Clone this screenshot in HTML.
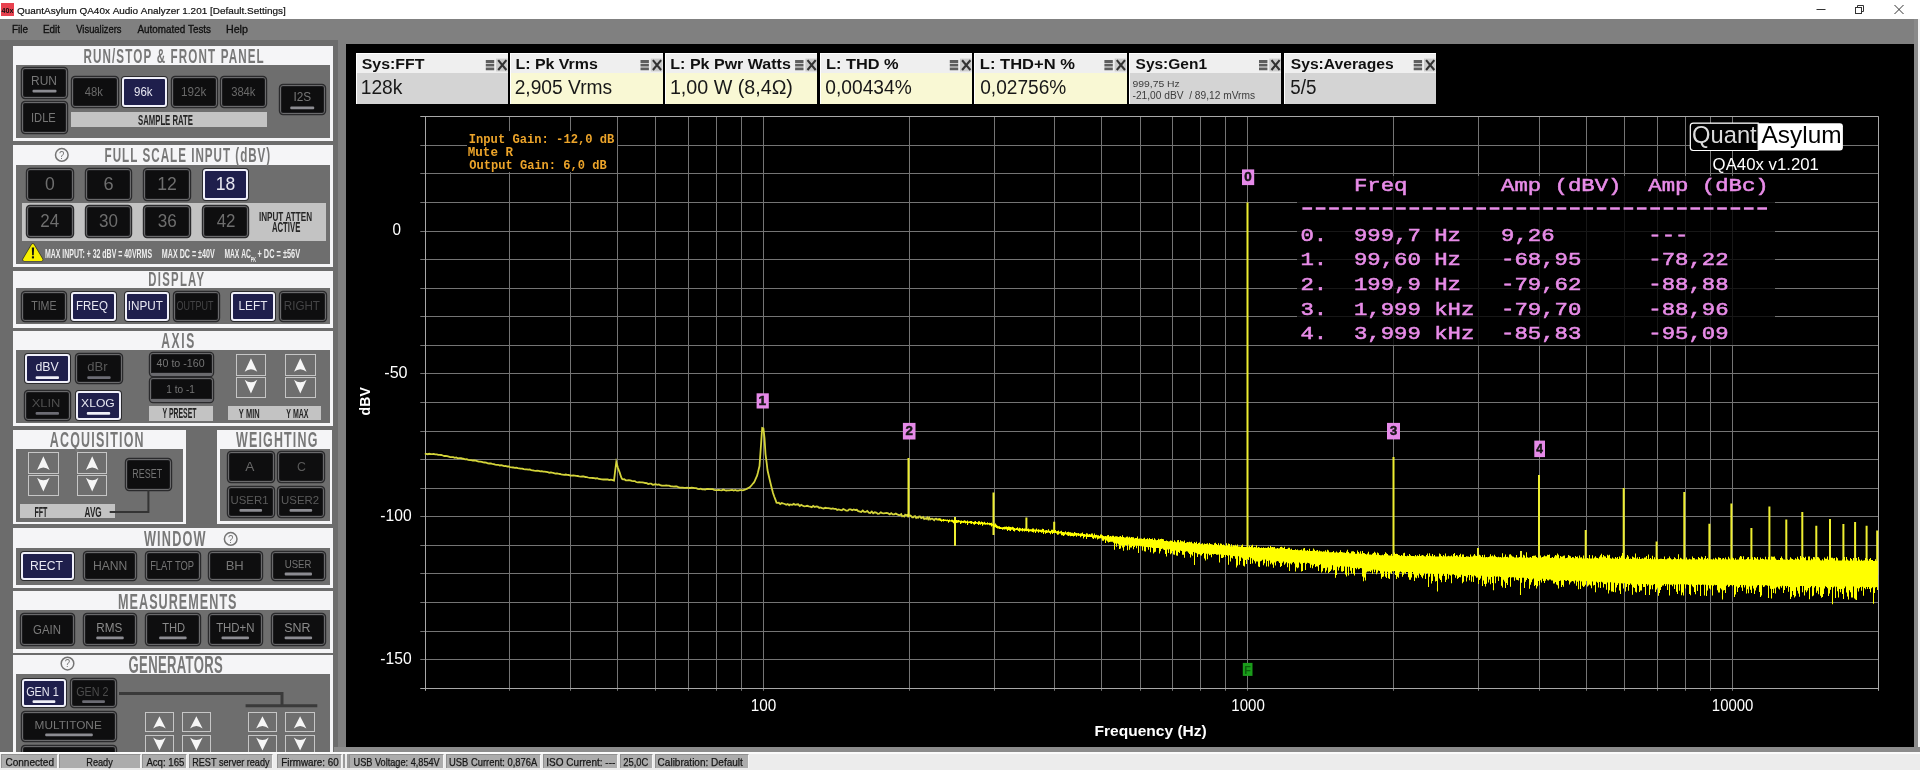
<!DOCTYPE html><html><head><meta charset="utf-8"><title>QuantAsylum QA40x Audio Analyzer</title><style>
html,body{margin:0;padding:0}
body{width:1920px;height:770px;overflow:hidden;position:relative;background:#808080;font-family:"Liberation Sans",sans-serif}
.btn{position:absolute;box-sizing:border-box;background:#0e0e0f;border:1.6px solid #6a6a6c;border-radius:3px;box-shadow:0 0 0 1.2px #2a2a2c,inset 0 0 0 1px #1c1c1e}
.on{background:#1f1f4c;border:2px solid #f0f0fa;box-shadow:0 0 0 1px #2a2a2c}
.arr{position:absolute;box-sizing:border-box;border:1px solid #c6c6c6}
.bar{position:absolute;background:#c3c3c3}
svg{position:absolute;left:0;top:0;overflow:visible;will-change:transform}

</style></head><body>
<div style="position:absolute;left:0px;top:0px;width:1920px;height:19px;background:#fff"></div>
<svg width="1920" height="770" style="z-index:1"><rect x="1" y="3" width="13" height="13" fill="#e8414f"/><text x="1.5" y="12.5" font-family="Liberation Sans" font-size="7.5" font-weight="bold" fill="#111" text-anchor="start" textLength="12" lengthAdjust="spacingAndGlyphs" >40x</text><text x="17.03" y="14" font-family="Liberation Sans" font-size="9.59" font-weight="normal" fill="#111" text-anchor="start" textLength="268.68" lengthAdjust="spacingAndGlyphs" stroke="#111" stroke-width="0.2">QuantAsylum&#160;QA40x&#160;Audio&#160;Analyzer&#160;1.201&#160;[Default.Settings]</text><line x1="1816.5" y1="9.5" x2="1825.5" y2="9.5" stroke="#333" stroke-width="1"/><rect x="1855.5" y="7.5" width="6" height="6" fill="none" stroke="#333" stroke-width="1"/><path d="M1857.5 7.5V5.5H1863.5V11.5H1861.5" fill="none" stroke="#333" stroke-width="1"/><path d="M1894.5 5L1903.5 14M1903.5 5L1894.5 14" stroke="#333" stroke-width="1"/><text x="11.99" y="32.6" font-family="Liberation Sans" font-size="10.17" font-weight="normal" fill="#101010" text-anchor="start" textLength="15.95" lengthAdjust="spacingAndGlyphs" stroke="#101010" stroke-width="0.3">File</text><text x="42.99" y="32.6" font-family="Liberation Sans" font-size="10.17" font-weight="normal" fill="#101010" text-anchor="start" textLength="17.09" lengthAdjust="spacingAndGlyphs" stroke="#101010" stroke-width="0.3">Edit</text><text x="76.26" y="32.6" font-family="Liberation Sans" font-size="10.17" font-weight="normal" fill="#101010" text-anchor="start" textLength="45.28" lengthAdjust="spacingAndGlyphs" stroke="#101010" stroke-width="0.3">Visualizers</text><text x="137.48" y="32.6" font-family="Liberation Sans" font-size="10.17" font-weight="normal" fill="#101010" text-anchor="start" textLength="73.57" lengthAdjust="spacingAndGlyphs" stroke="#101010" stroke-width="0.3">Automated&#160;Tests</text><text x="225.92" y="32.6" font-family="Liberation Sans" font-size="10.17" font-weight="normal" fill="#101010" text-anchor="start" textLength="22.03" lengthAdjust="spacingAndGlyphs" stroke="#101010" stroke-width="0.3">Help</text></svg>
<div style="position:absolute;left:0px;top:40px;width:337.5px;height:712px;background:#6c6c6c"></div>
<div style="position:absolute;left:1914px;top:19px;width:4px;height:733px;background:#8a8a8a"></div>
<div style="position:absolute;left:1918px;top:19px;width:2px;height:733px;background:#f4f4f4"></div>
<div style="position:absolute;left:13px;top:46px;width:319.5px;height:95px;background:#f5f5f7"></div>
<div style="position:absolute;left:16px;top:65px;width:314.0px;height:73.2px;background:#6e6e6e"></div>
<div class="btn" style="left:22px;top:68px;width:45px;height:29.7px;"></div>
<div class="btn" style="left:22px;top:102.3px;width:45px;height:30.9px;"></div>
<div class="btn" style="left:72px;top:77.4px;width:45.7px;height:29.3px;"></div>
<div class="btn on" style="left:122px;top:77.4px;width:44.9px;height:29.3px;"></div>
<div class="btn" style="left:171.7px;top:77.4px;width:44.9px;height:29.3px;"></div>
<div class="btn" style="left:220.8px;top:77.4px;width:44.9px;height:29.3px;"></div>
<div class="btn" style="left:279.5px;top:84.6px;width:45.5px;height:29.9px;"></div>
<div class="bar" style="left:71px;top:112px;width:196px;height:14.5px"></div>
<div style="position:absolute;left:13px;top:145px;width:319.5px;height:122px;background:#f5f5f7"></div>
<div style="position:absolute;left:16px;top:165px;width:314.0px;height:99.4px;background:#6e6e6e"></div>
<div class="bar" style="left:21.5px;top:202.5px;width:304px;height:38.5px"></div>
<div class="btn" style="left:27px;top:169px;width:45.6px;height:30.6px;"></div>
<div class="btn" style="left:85.5px;top:169px;width:45.6px;height:30.6px;"></div>
<div class="btn" style="left:144.2px;top:169px;width:45.6px;height:30.6px;"></div>
<div class="btn on" style="left:202.9px;top:169px;width:45.6px;height:30.6px;"></div>
<div class="btn" style="left:27px;top:206.3px;width:45.6px;height:30.7px;"></div>
<div class="btn" style="left:85.5px;top:206.3px;width:45.6px;height:30.7px;"></div>
<div class="btn" style="left:144.2px;top:206.3px;width:45.6px;height:30.7px;"></div>
<div class="btn" style="left:202.9px;top:206.3px;width:45.6px;height:30.7px;"></div>
<div style="position:absolute;left:13px;top:270.5px;width:319.5px;height:57.0px;background:#f5f5f7"></div>
<div style="position:absolute;left:16px;top:287.7px;width:314.0px;height:36.7px;background:#6e6e6e"></div>
<div class="btn" style="left:21.7px;top:291.8px;width:44.8px;height:29.2px;"></div>
<div class="btn on" style="left:71px;top:291.8px;width:44.5px;height:29.2px;"></div>
<div class="btn on" style="left:125px;top:291.8px;width:44px;height:29.2px;"></div>
<div class="btn" style="left:173.6px;top:291.8px;width:45.5px;height:29.2px;"></div>
<div class="btn on" style="left:231.2px;top:291.8px;width:44.1px;height:29.2px;"></div>
<div class="btn" style="left:280.1px;top:291.8px;width:45.5px;height:29.2px;"></div>
<div style="position:absolute;left:13px;top:331px;width:319.5px;height:94.5px;background:#f5f5f7"></div>
<div style="position:absolute;left:16px;top:350px;width:314.0px;height:73px;background:#6e6e6e"></div>
<div class="btn on" style="left:24.9px;top:354.3px;width:44.8px;height:29.2px;"></div>
<div class="btn" style="left:76.2px;top:354.3px;width:45.5px;height:29.2px;"></div>
<div class="btn" style="left:24.9px;top:390.6px;width:44.8px;height:29.3px;"></div>
<div class="btn on" style="left:76px;top:390.6px;width:45px;height:29.3px;"></div>
<div class="btn" style="left:150.3px;top:353px;width:62.3px;height:22.7px;border-bottom:3px solid #6a6a6e;"></div>
<div class="btn" style="left:150.3px;top:378.3px;width:62.3px;height:24.0px;border-bottom:3px solid #6a6a6e;"></div>
<div class="bar" style="left:149px;top:405.6px;width:64px;height:15px"></div>
<div class="arr" style="left:235.7px;top:354.3px;width:30.5px;height:21.4px"></div>
<div class="arr" style="left:235.7px;top:377px;width:30.5px;height:20.8px"></div>
<div class="arr" style="left:285px;top:354.3px;width:30.6px;height:21.4px"></div>
<div class="arr" style="left:285px;top:377px;width:30.6px;height:20.8px"></div>
<div class="bar" style="left:228px;top:406.2px;width:93.4px;height:13.7px"></div>
<div style="position:absolute;left:13px;top:429.7px;width:173.1px;height:94.7px;background:#f5f5f7"></div>
<div style="position:absolute;left:16.2px;top:448.8px;width:167.1px;height:73.2px;background:#6e6e6e"></div>
<div class="arr" style="left:27.9px;top:452.4px;width:30.9px;height:21.4px"></div>
<div class="arr" style="left:27.9px;top:474.9px;width:30.9px;height:21.0px"></div>
<div class="arr" style="left:77px;top:452.4px;width:30.4px;height:21.4px"></div>
<div class="arr" style="left:77px;top:474.9px;width:30.4px;height:21.0px"></div>
<div class="btn" style="left:126.1px;top:459.4px;width:45.2px;height:30.3px;"></div>
<div class="bar" style="left:20.1px;top:504.2px;width:95.4px;height:14.3px"></div>
<div style="position:absolute;left:217.4px;top:429.7px;width:115.1px;height:94.3px;background:#f5f5f7"></div>
<div style="position:absolute;left:220.2px;top:448.5px;width:109.4px;height:72.8px;background:#6e6e6e"></div>
<div class="btn" style="left:228px;top:452px;width:45.5px;height:30px;"></div>
<div class="btn" style="left:278.1px;top:452px;width:45.5px;height:30px;"></div>
<div class="btn" style="left:228px;top:487.3px;width:45.5px;height:30.1px;"></div>
<div class="btn" style="left:278.1px;top:487.3px;width:45.5px;height:30.1px;"></div>
<div style="position:absolute;left:13px;top:528.2px;width:319.5px;height:60.3px;background:#f5f5f7"></div>
<div style="position:absolute;left:16px;top:548.2px;width:314.0px;height:37.3px;background:#6e6e6e"></div>
<div class="btn on" style="left:20.9px;top:551.8px;width:52.7px;height:28.6px;"></div>
<div class="btn" style="left:83.6px;top:551.8px;width:52.8px;height:28.6px;"></div>
<div class="btn" style="left:146px;top:551.8px;width:53.8px;height:28.6px;"></div>
<div class="btn" style="left:208.7px;top:551.8px;width:53.1px;height:28.6px;"></div>
<div class="btn" style="left:271.8px;top:551.8px;width:53.1px;height:28.6px;"></div>
<div style="position:absolute;left:13px;top:591.2px;width:319.5px;height:61.4px;background:#f5f5f7"></div>
<div style="position:absolute;left:16px;top:610.3px;width:314.0px;height:38.8px;background:#6e6e6e"></div>
<div class="btn" style="left:20.9px;top:614.4px;width:52.7px;height:30.4px;"></div>
<div class="btn" style="left:83.6px;top:614.4px;width:52.8px;height:30.4px;"></div>
<div class="btn" style="left:146px;top:614.4px;width:53.8px;height:30.4px;"></div>
<div class="btn" style="left:208.7px;top:614.4px;width:53.1px;height:30.4px;"></div>
<div class="btn" style="left:271.8px;top:614.4px;width:53.1px;height:30.4px;"></div>
<div style="position:absolute;left:13px;top:655px;width:319.5px;height:105px;background:#f5f5f7"></div>
<div style="position:absolute;left:16px;top:673.8px;width:314.0px;height:86.2px;background:#6e6e6e"></div>
<div class="btn on" style="left:22px;top:679.2px;width:43.9px;height:28.3px;"></div>
<div class="btn" style="left:70.9px;top:679.2px;width:45.3px;height:28.3px;"></div>
<div class="btn" style="left:22px;top:712.3px;width:94px;height:29.0px;"></div>
<div class="btn" style="left:22px;top:745.5px;width:94px;height:34.5px;"></div>
<div class="arr" style="left:145px;top:712.3px;width:28.9px;height:20.0px"></div>
<div class="arr" style="left:145px;top:734.6px;width:28.9px;height:20.4px"></div>
<div class="arr" style="left:181.7px;top:712.3px;width:29.3px;height:20.0px"></div>
<div class="arr" style="left:181.7px;top:734.6px;width:29.3px;height:20.4px"></div>
<div class="arr" style="left:247.9px;top:712.3px;width:29.1px;height:20.0px"></div>
<div class="arr" style="left:247.9px;top:734.6px;width:29.1px;height:20.4px"></div>
<div class="arr" style="left:285.3px;top:712.3px;width:29.6px;height:20.0px"></div>
<div class="arr" style="left:285.3px;top:734.6px;width:29.6px;height:20.4px"></div>
<svg width="1920" height="770" style="z-index:2"><text transform="translate(83.42,62.8) scale(0.56,1)" x="0" y="0" font-family="Liberation Sans" font-size="20.78" font-weight="bold" fill="#787878" letter-spacing="2.02">RUN/STOP&#160;&amp;&#160;FRONT&#160;PANEL</text><text x="31.02" y="85.2" font-family="Liberation Sans" font-size="12.5" font-weight="normal" fill="#777777" text-anchor="start" textLength="25.96" lengthAdjust="spacingAndGlyphs" >RUN</text><rect x="32.5" y="89.7" width="24" height="2.8" rx="1" fill="#8c8c92"/><text x="30.97" y="121.8" font-family="Liberation Sans" font-size="12.5" font-weight="normal" fill="#777777" text-anchor="start" textLength="24.81" lengthAdjust="spacingAndGlyphs" >IDLE</text><text x="84.74" y="95.8" font-family="Liberation Sans" font-size="12.06" font-weight="normal" fill="#696969" text-anchor="start" textLength="18.14" lengthAdjust="spacingAndGlyphs" >48k</text><text x="134.06" y="95.8" font-family="Liberation Sans" font-size="12.35" font-weight="normal" fill="#e8e8f2" text-anchor="start" textLength="18.42" lengthAdjust="spacingAndGlyphs" >96k</text><text x="181.01" y="95.8" font-family="Liberation Sans" font-size="12.35" font-weight="normal" fill="#696969" text-anchor="start" textLength="25.37" lengthAdjust="spacingAndGlyphs" >192k</text><text x="231.17" y="95.8" font-family="Liberation Sans" font-size="12.35" font-weight="normal" fill="#696969" text-anchor="start" textLength="24.31" lengthAdjust="spacingAndGlyphs" >384k</text><text x="293.41" y="101.2" font-family="Liberation Sans" font-size="12.94" font-weight="normal" fill="#777777" text-anchor="start" textLength="17.73" lengthAdjust="spacingAndGlyphs" >I2S</text><rect x="290.25" y="106.5" width="24" height="2.8" rx="1" fill="#8c8c92"/><text x="137.98" y="124.7" font-family="Liberation Sans" font-size="13.95" font-weight="bold" fill="#252525" text-anchor="start" textLength="55.02" lengthAdjust="spacingAndGlyphs" >SAMPLE&#160;RATE</text><circle cx="61.8" cy="154.9" r="6.3" fill="none" stroke="#747474" stroke-width="1.5"/><text x="59.11" y="158.7" font-family="Liberation Sans" font-size="11.05" font-weight="normal" fill="#747474" text-anchor="start" textLength="5.35" lengthAdjust="spacingAndGlyphs" >?</text><text transform="translate(104.62,162.3) scale(0.56,1)" x="0" y="0" font-family="Liberation Sans" font-size="20.78" font-weight="bold" fill="#787878" letter-spacing="1.78">FULL&#160;SCALE&#160;INPUT&#160;(dBV)</text><text x="45.11" y="189.8" font-family="Liberation Sans" font-size="18.31" font-weight="normal" fill="#6e6e6e" text-anchor="start" textLength="9.77" lengthAdjust="spacingAndGlyphs" >0</text><text x="103.38" y="189.8" font-family="Liberation Sans" font-size="18.31" font-weight="normal" fill="#6e6e6e" text-anchor="start" textLength="10.12" lengthAdjust="spacingAndGlyphs" >6</text><text x="157.16" y="189.8" font-family="Liberation Sans" font-size="18.31" font-weight="normal" fill="#6e6e6e" text-anchor="start" textLength="19.63" lengthAdjust="spacingAndGlyphs" >12</text><text x="215.86" y="189.8" font-family="Liberation Sans" font-size="18.31" font-weight="normal" fill="#e8e8f2" text-anchor="start" textLength="19.5" lengthAdjust="spacingAndGlyphs" >18</text><text x="40.34" y="227.2" font-family="Liberation Sans" font-size="18.6" font-weight="normal" fill="#6e6e6e" text-anchor="start" textLength="18.96" lengthAdjust="spacingAndGlyphs" >24</text><text x="99.05" y="227.2" font-family="Liberation Sans" font-size="18.6" font-weight="normal" fill="#6e6e6e" text-anchor="start" textLength="18.91" lengthAdjust="spacingAndGlyphs" >30</text><text x="157.75" y="227.2" font-family="Liberation Sans" font-size="18.6" font-weight="normal" fill="#6e6e6e" text-anchor="start" textLength="19.0" lengthAdjust="spacingAndGlyphs" >36</text><text x="216.71" y="227.2" font-family="Liberation Sans" font-size="18.6" font-weight="normal" fill="#6e6e6e" text-anchor="start" textLength="18.84" lengthAdjust="spacingAndGlyphs" >42</text><text x="258.96" y="221" font-family="Liberation Sans" font-size="13.52" font-weight="bold" fill="#252525" text-anchor="start" textLength="53.08" lengthAdjust="spacingAndGlyphs" >INPUT&#160;ATTEN</text><text x="271.91" y="232" font-family="Liberation Sans" font-size="13.95" font-weight="bold" fill="#252525" text-anchor="start" textLength="28.4" lengthAdjust="spacingAndGlyphs" >ACTIVE</text><path d="M32.8 245.3L41.3 259.6H24.3Z" fill="#f4ee10" stroke="#3c3c20" stroke-width="4" stroke-linejoin="round"/><path d="M32.8 245.3L41.3 259.6H24.3Z" fill="#f8f000" stroke="#f8f000" stroke-width="2.6" stroke-linejoin="round"/><path d="M31.8 247.6h2.3l-0.35 7.6h-1.6z" fill="#111"/><rect x="31.9" y="256.3" width="2.1" height="2.1" fill="#111"/><text x="44.94" y="258.2" font-family="Liberation Sans" font-size="12.35" font-weight="bold" fill="#eeeeee" text-anchor="start" textLength="107.13" lengthAdjust="spacingAndGlyphs" >MAX&#160;INPUT:&#160;+&#160;32&#160;dBV&#160;=&#160;40VRMS</text><text x="161.82" y="258.2" font-family="Liberation Sans" font-size="12.35" font-weight="bold" fill="#eeeeee" text-anchor="start" textLength="52.93" lengthAdjust="spacingAndGlyphs" >MAX&#160;DC&#160;=&#160;±40V</text><text x="224.45" y="258.2" font-family="Liberation Sans" font-size="12.35" font-weight="bold" fill="#eeeeee" text-anchor="start" textLength="26.43" lengthAdjust="spacingAndGlyphs" >MAX&#160;AC</text><text x="250.75" y="261.5" font-family="Liberation Sans" font-size="6.54" font-weight="bold" fill="#eeeeee" text-anchor="start" textLength="5.29" lengthAdjust="spacingAndGlyphs" >PK</text><text x="257.49" y="258.2" font-family="Liberation Sans" font-size="12.35" font-weight="bold" fill="#eeeeee" text-anchor="start" textLength="42.56" lengthAdjust="spacingAndGlyphs" >+&#160;DC&#160;=&#160;±56V</text><text transform="translate(148.34,286.4) scale(0.56,1)" x="0" y="0" font-family="Liberation Sans" font-size="20.2" font-weight="bold" fill="#787878" letter-spacing="2.32">DISPLAY</text><text x="31.16" y="310" font-family="Liberation Sans" font-size="12.21" font-weight="normal" fill="#707070" text-anchor="start" textLength="25.4" lengthAdjust="spacingAndGlyphs" >TIME</text><text x="75.96" y="310" font-family="Liberation Sans" font-size="12.21" font-weight="normal" fill="#e8e8f2" text-anchor="start" textLength="32.0" lengthAdjust="spacingAndGlyphs" >FREQ</text><text x="127.72" y="310" font-family="Liberation Sans" font-size="12.21" font-weight="normal" fill="#e8e8f2" text-anchor="start" textLength="35.15" lengthAdjust="spacingAndGlyphs" >INPUT</text><text x="176.47" y="310" font-family="Liberation Sans" font-size="12.21" font-weight="normal" fill="#444446" text-anchor="start" textLength="36.93" lengthAdjust="spacingAndGlyphs" >OUTPUT</text><text x="238.53" y="310" font-family="Liberation Sans" font-size="12.21" font-weight="normal" fill="#e8e8f2" text-anchor="start" textLength="28.84" lengthAdjust="spacingAndGlyphs" >LEFT</text><text x="283.74" y="310" font-family="Liberation Sans" font-size="12.21" font-weight="normal" fill="#444446" text-anchor="start" textLength="36.22" lengthAdjust="spacingAndGlyphs" >RIGHT</text><text transform="translate(161.3,348.1) scale(0.56,1)" x="0" y="0" font-family="Liberation Sans" font-size="21.51" font-weight="bold" fill="#787878" letter-spacing="2.89">AXIS</text><text x="35.48" y="371.2" font-family="Liberation Sans" font-size="12.35" font-weight="normal" fill="#e8e8f2" text-anchor="start" textLength="23.27" lengthAdjust="spacingAndGlyphs" >dBV</text><rect x="35.6" y="376.3" width="23.4" height="2.8" rx="1" fill="#f0f0f8"/><text x="87.35" y="371.2" font-family="Liberation Sans" font-size="12.35" font-weight="normal" fill="#5a5a5a" text-anchor="start" textLength="20.26" lengthAdjust="spacingAndGlyphs" >dBr</text><rect x="87.25" y="376.3" width="23.4" height="2.8" rx="1" fill="#6c6c74"/><text x="31.71" y="406.9" font-family="Liberation Sans" font-size="11.48" font-weight="normal" fill="#4e4e4e" text-anchor="start" textLength="28.74" lengthAdjust="spacingAndGlyphs" >XLIN</text><rect x="35.6" y="412.0" width="23.4" height="2.8" rx="1" fill="#6c6c74"/><text x="81.13" y="406.9" font-family="Liberation Sans" font-size="11.48" font-weight="normal" fill="#e8e8f2" text-anchor="start" textLength="33.68" lengthAdjust="spacingAndGlyphs" >XLOG</text><rect x="86.8" y="412.0" width="23.4" height="2.8" rx="1" fill="#f0f0f8"/><text x="156.56" y="366.6" font-family="Liberation Sans" font-size="10.32" font-weight="normal" fill="#757575" text-anchor="start" textLength="48.06" lengthAdjust="spacingAndGlyphs" >40&#160;to&#160;-160</text><text x="166.33" y="392.6" font-family="Liberation Sans" font-size="11.34" font-weight="normal" fill="#757575" text-anchor="start" textLength="28.56" lengthAdjust="spacingAndGlyphs" >1&#160;to&#160;-1</text><text x="162.48" y="417.9" font-family="Liberation Sans" font-size="14.1" font-weight="bold" fill="#252525" text-anchor="start" textLength="33.99" lengthAdjust="spacingAndGlyphs" >Y&#160;PRESET</text><path d="M250.95 358.20L257.25 371.80Q250.95 366.80 244.65 371.80Z" fill="#f6f6f6"/><path d="M250.95 393.40L257.25 379.80Q250.95 384.80 244.65 379.80Z" fill="#f6f6f6"/><path d="M300.30 358.20L306.60 371.80Q300.30 366.80 294.00 371.80Z" fill="#f6f6f6"/><path d="M300.30 393.40L306.60 379.80Q300.30 384.80 294.00 379.80Z" fill="#f6f6f6"/><text x="238.87" y="417.7" font-family="Liberation Sans" font-size="12.94" font-weight="bold" fill="#252525" text-anchor="start" textLength="20.73" lengthAdjust="spacingAndGlyphs" >Y&#160;MIN</text><text x="286.28" y="417.7" font-family="Liberation Sans" font-size="12.94" font-weight="bold" fill="#252525" text-anchor="start" textLength="22.18" lengthAdjust="spacingAndGlyphs" >Y&#160;MAX</text><text transform="translate(49.79,447) scale(0.56,1)" x="0" y="0" font-family="Liberation Sans" font-size="22.24" font-weight="bold" fill="#787878" letter-spacing="2.18">ACQUISITION</text><path d="M43.35 456.30L49.65 469.90Q43.35 464.90 37.05 469.90Z" fill="#f6f6f6"/><path d="M43.35 491.50L49.65 477.70Q43.35 482.70 37.05 477.70Z" fill="#f6f6f6"/><path d="M92.20 456.30L98.50 469.90Q92.20 464.90 85.90 469.90Z" fill="#f6f6f6"/><path d="M92.20 491.50L98.50 477.70Q92.20 482.70 85.90 477.70Z" fill="#f6f6f6"/><text x="132.37" y="478.4" font-family="Liberation Sans" font-size="12.35" font-weight="normal" fill="#737373" text-anchor="start" textLength="29.84" lengthAdjust="spacingAndGlyphs" >RESET</text><text x="34.42" y="516.6" font-family="Liberation Sans" font-size="14.68" font-weight="bold" fill="#252525" text-anchor="start" textLength="13.05" lengthAdjust="spacingAndGlyphs" >FFT</text><text x="84.6" y="516.6" font-family="Liberation Sans" font-size="14.68" font-weight="bold" fill="#252525" text-anchor="start" textLength="17.09" lengthAdjust="spacingAndGlyphs" >AVG</text><path d="M148.4 490V512H109.7" fill="none" stroke="#343434" stroke-width="2"/><text transform="translate(236.09,447) scale(0.56,1)" x="0" y="0" font-family="Liberation Sans" font-size="22.24" font-weight="bold" fill="#787878" letter-spacing="2.08">WEIGHTING</text><text x="245.37" y="471.4" font-family="Liberation Sans" font-size="12.5" font-weight="normal" fill="#676767" text-anchor="start" textLength="9.15" lengthAdjust="spacingAndGlyphs" >A</text><text x="296.97" y="471.4" font-family="Liberation Sans" font-size="12.5" font-weight="normal" fill="#5a5a5a" text-anchor="start" textLength="8.89" lengthAdjust="spacingAndGlyphs" >C</text><text x="230.52" y="504.1" font-family="Liberation Sans" font-size="11.77" font-weight="normal" fill="#5b5b5b" text-anchor="start" textLength="38.04" lengthAdjust="spacingAndGlyphs" >USER1</text><rect x="239.45" y="509.0" width="22.6" height="2.8" rx="1" fill="#8c8c92"/><text x="281.12" y="504.1" font-family="Liberation Sans" font-size="11.77" font-weight="normal" fill="#5b5b5b" text-anchor="start" textLength="38.05" lengthAdjust="spacingAndGlyphs" >USER2</text><rect x="289.55" y="509.0" width="22.6" height="2.8" rx="1" fill="#8c8c92"/><text transform="translate(143.89,546.3) scale(0.56,1)" x="0" y="0" font-family="Liberation Sans" font-size="22.67" font-weight="bold" fill="#787878" letter-spacing="2.15">WINDOW</text><circle cx="230.7" cy="538.9" r="6.3" fill="none" stroke="#747474" stroke-width="1.5"/><text x="228.01" y="542.7" font-family="Liberation Sans" font-size="11.05" font-weight="normal" fill="#747474" text-anchor="start" textLength="5.35" lengthAdjust="spacingAndGlyphs" >?</text><text x="29.9" y="570" font-family="Liberation Sans" font-size="13.23" font-weight="normal" fill="#e8e8f2" text-anchor="start" textLength="33.08" lengthAdjust="spacingAndGlyphs" >RECT</text><text x="93.0" y="570" font-family="Liberation Sans" font-size="13.23" font-weight="normal" fill="#757575" text-anchor="start" textLength="34.39" lengthAdjust="spacingAndGlyphs" >HANN</text><text x="150.15" y="570" font-family="Liberation Sans" font-size="13.23" font-weight="normal" fill="#757575" text-anchor="start" textLength="43.94" lengthAdjust="spacingAndGlyphs" >FLAT&#160;TOP</text><text x="225.63" y="570" font-family="Liberation Sans" font-size="13.23" font-weight="normal" fill="#757575" text-anchor="start" textLength="18.14" lengthAdjust="spacingAndGlyphs" >BH</text><text x="284.76" y="567.6" font-family="Liberation Sans" font-size="11.63" font-weight="normal" fill="#757575" text-anchor="start" textLength="26.58" lengthAdjust="spacingAndGlyphs" >USER</text><rect x="284.7" y="572.6" width="27.3" height="2.8" rx="1" fill="#8c8c92"/><text transform="translate(118.06,609.1) scale(0.56,1)" x="0" y="0" font-family="Liberation Sans" font-size="22.53" font-weight="bold" fill="#787878" letter-spacing="1.83">MEASUREMENTS</text><text x="33.03" y="633.6" font-family="Liberation Sans" font-size="12.5" font-weight="normal" fill="#7a7a7a" text-anchor="start" textLength="27.9" lengthAdjust="spacingAndGlyphs" >GAIN</text><text x="96.34" y="631.6" font-family="Liberation Sans" font-size="12.06" font-weight="normal" fill="#8a8a8a" text-anchor="start" textLength="26.0" lengthAdjust="spacingAndGlyphs" >RMS</text><rect x="96.25" y="636.4" width="27.5" height="2.8" rx="1" fill="#8c8c92"/><text x="162.15" y="631.6" font-family="Liberation Sans" font-size="12.5" font-weight="normal" fill="#8a8a8a" text-anchor="start" textLength="22.99" lengthAdjust="spacingAndGlyphs" >THD</text><rect x="159.15" y="636.4" width="27.5" height="2.8" rx="1" fill="#8c8c92"/><text x="216.14" y="631.6" font-family="Liberation Sans" font-size="12.5" font-weight="normal" fill="#8a8a8a" text-anchor="start" textLength="38.39" lengthAdjust="spacingAndGlyphs" >THD+N</text><rect x="221.5" y="636.4" width="27.5" height="2.8" rx="1" fill="#8c8c92"/><text x="284.34" y="631.6" font-family="Liberation Sans" font-size="12.5" font-weight="normal" fill="#8a8a8a" text-anchor="start" textLength="26.24" lengthAdjust="spacingAndGlyphs" >SNR</text><rect x="284.6" y="636.4" width="27.5" height="2.8" rx="1" fill="#8c8c92"/><text transform="translate(128.56,672.6) scale(0.56,1)" x="0" y="0" font-family="Liberation Sans" font-size="23.4" font-weight="bold" fill="#787878" letter-spacing="0.59">GENERATORS</text><circle cx="67.5" cy="663.6" r="6.3" fill="none" stroke="#747474" stroke-width="1.5"/><text x="64.81" y="667.4" font-family="Liberation Sans" font-size="11.05" font-weight="normal" fill="#747474" text-anchor="start" textLength="5.35" lengthAdjust="spacingAndGlyphs" >?</text><text x="26.15" y="695.7" font-family="Liberation Sans" font-size="12.65" font-weight="normal" fill="#e8e8f2" text-anchor="start" textLength="32.68" lengthAdjust="spacingAndGlyphs" >GEN&#160;1</text><rect x="32.55" y="700.2" width="22.8" height="2.8" rx="1" fill="#f0f0f8"/><text x="76.26" y="695.7" font-family="Liberation Sans" font-size="12.65" font-weight="normal" fill="#4c4c4c" text-anchor="start" textLength="32.28" lengthAdjust="spacingAndGlyphs" >GEN&#160;2</text><rect x="82.15" y="700.2" width="22.8" height="2.8" rx="1" fill="#6c6c74"/><text x="34.55" y="728.7" font-family="Liberation Sans" font-size="11.63" font-weight="normal" fill="#757575" text-anchor="start" textLength="67.26" lengthAdjust="spacingAndGlyphs" >MULTITONE</text><rect x="45.2" y="733.5" width="47.6" height="2.8" rx="1" fill="#8c8c92"/><path d="M119 693.5H282V705.8" fill="none" stroke="#3a3a3a" stroke-width="3"/><path d="M245.6 705.8H317.3" fill="none" stroke="#3a3a3a" stroke-width="3"/><path d="M159.45 716.20L165.75 728.40Q159.45 723.40 153.15 728.40Z" fill="#f6f6f6"/><path d="M159.45 750.60L165.75 737.40Q159.45 742.40 153.15 737.40Z" fill="#f6f6f6"/><path d="M196.35 716.20L202.65 728.40Q196.35 723.40 190.05 728.40Z" fill="#f6f6f6"/><path d="M196.35 750.60L202.65 737.40Q196.35 742.40 190.05 737.40Z" fill="#f6f6f6"/><path d="M262.45 716.20L268.75 728.40Q262.45 723.40 256.15 728.40Z" fill="#f6f6f6"/><path d="M262.45 750.60L268.75 737.40Q262.45 742.40 256.15 737.40Z" fill="#f6f6f6"/><path d="M300.10 716.20L306.40 728.40Q300.10 723.40 293.80 728.40Z" fill="#f6f6f6"/><path d="M300.10 750.60L306.40 737.40Q300.10 742.40 293.80 737.40Z" fill="#f6f6f6"/></svg>
<div style="position:absolute;left:346px;top:44px;width:1568px;height:703px;background:#000"></div>
<svg width="1920" height="770" style="z-index:3"><path d="M509.5 116.2V690.8M570.5 116.2V690.8M617.5 116.2V690.8M655.5 116.2V690.8M688.5 116.2V690.8M716.5 116.2V690.8M741.5 116.2V690.8M763.5 116.2V690.8M909.5 116.2V690.8M994.5 116.2V690.8M1054.5 116.2V690.8M1101.5 116.2V690.8M1140.5 116.2V690.8M1172.5 116.2V690.8M1200.5 116.2V690.8M1225.5 116.2V690.8M1247.5 116.2V690.8M1393.5 116.2V690.8M1478.5 116.2V690.8M1539.5 116.2V690.8M1586.5 116.2V690.8M1624.5 116.2V690.8M1657.5 116.2V690.8M1685.5 116.2V690.8M1710.5 116.2V690.8M1732.5 116.2V690.8M420.25 145.5H1878.25M420.25 173.5H1878.25M420.25 202.5H1878.25M420.25 231.5H1878.25M420.25 259.5H1878.25M420.25 288.5H1878.25M420.25 316.5H1878.25M420.25 345.5H1878.25M420.25 373.5H1878.25M420.25 402.5H1878.25M420.25 431.5H1878.25M420.25 459.5H1878.25M420.25 488.5H1878.25M420.25 516.5H1878.25M420.25 545.5H1878.25M420.25 573.5H1878.25M420.25 602.5H1878.25M420.25 631.5H1878.25M420.25 659.5H1878.25" stroke="#747474" stroke-width="1" fill="none"/><path d="M420.25 116.5H1878.25M420.25 688.5H1878.25M425.5 116.2V690.8M1878.5 116.2V690.8" stroke="#a8a8a8" stroke-width="1" fill="none"/><text x="392.4" y="234.92" font-family="Liberation Sans" font-size="15.7" font-weight="normal" fill="#fff" text-anchor="start" textLength="8.49" lengthAdjust="spacingAndGlyphs" >0</text><text x="384.28" y="377.82" font-family="Liberation Sans" font-size="15.7" font-weight="normal" fill="#fff" text-anchor="start" textLength="23.35" lengthAdjust="spacingAndGlyphs" >-50</text><text x="380.3" y="520.72" font-family="Liberation Sans" font-size="15.7" font-weight="normal" fill="#fff" text-anchor="start" textLength="31.31" lengthAdjust="spacingAndGlyphs" >-100</text><text x="380.3" y="663.62" font-family="Liberation Sans" font-size="15.7" font-weight="normal" fill="#fff" text-anchor="start" textLength="31.31" lengthAdjust="spacingAndGlyphs" >-150</text><text x="750.83" y="711.2" font-family="Liberation Sans" font-size="15.84" font-weight="normal" fill="#fff" text-anchor="start" textLength="25.57" lengthAdjust="spacingAndGlyphs" >100</text><text x="1231.35" y="711.2" font-family="Liberation Sans" font-size="15.84" font-weight="normal" fill="#fff" text-anchor="start" textLength="33.54" lengthAdjust="spacingAndGlyphs" >1000</text><text x="1711.86" y="711.2" font-family="Liberation Sans" font-size="15.84" font-weight="normal" fill="#fff" text-anchor="start" textLength="41.52" lengthAdjust="spacingAndGlyphs" >10000</text><text x="1094.56" y="735.5" font-family="Liberation Sans" font-size="14.6" font-weight="bold" fill="#fff" text-anchor="start" textLength="112.21" lengthAdjust="spacingAndGlyphs" >Frequency&#160;(Hz)</text><text x="0" y="0" font-family="Liberation Sans" font-size="14.3" font-weight="bold" fill="#fff" textLength="28.2" lengthAdjust="spacingAndGlyphs" transform="translate(369.6,415.4) rotate(-90)">dBV</text><polyline points="424.8,453.9 426.2,453.8 427.8,454.2 429.2,453.8 430.8,454.2 432.2,454.1 433.8,454.0 435.0,454.3 436.8,454.3 438.2,454.8 439.8,454.8 441.2,455.0 442.8,455.5 444.2,456.0 445.8,455.8 447.2,456.1 448.8,456.6 450.2,457.1 451.8,457.1 453.2,457.2 454.8,457.8 456.2,457.4 457.8,458.3 459.2,458.1 460.8,458.2 462.2,458.5 463.8,458.8 465.2,459.4 466.8,459.2 468.2,459.8 470.0,460.1 471.2,460.1 472.8,460.5 474.2,460.4 475.8,460.7 477.2,461.1 478.8,461.7 480.2,461.7 481.8,461.9 483.2,462.4 484.8,462.5 486.2,462.7 487.8,463.3 489.2,463.5 490.8,463.5 492.2,463.9 493.8,464.2 495.2,464.7 496.8,464.8 498.2,464.8 499.8,465.5 501.2,465.2 502.8,465.7 504.2,466.2 505.8,466.0 507.2,466.5 508.8,466.5 510.0,467.1 511.8,467.4 513.2,467.5 514.8,467.9 516.2,467.7 517.8,468.2 519.2,468.4 520.8,468.6 522.2,468.7 523.8,469.2 525.2,469.4 526.8,469.3 528.2,469.7 529.8,469.5 531.2,470.1 532.8,470.3 534.2,470.7 535.8,470.8 537.2,470.7 538.8,470.9 540.2,471.4 541.8,471.1 543.2,471.6 544.8,471.6 546.2,471.8 547.8,472.0 549.2,472.7 550.8,472.4 552.2,472.7 553.8,473.0 555.2,473.6 556.8,473.3 558.2,473.7 560.0,474.0 561.2,474.4 562.8,474.6 564.2,474.8 565.8,474.5 567.2,474.8 568.8,475.0 570.2,475.5 571.8,475.7 573.2,475.4 574.8,475.6 576.2,475.8 577.8,476.0 579.2,476.3 580.8,476.6 582.2,476.5 583.8,476.5 585.2,477.0 586.8,477.1 588.2,477.5 589.8,477.9 591.2,477.9 592.8,478.0 594.2,478.2 595.8,478.5 597.2,478.2 598.8,479.0 600.2,479.2 601.8,479.4 603.2,479.5 604.8,479.3 606.2,479.5 607.8,479.4 609.2,480.1 610.8,479.7 612.0,479.9 614.0,480.5 615.2,470.6 616.3,462.2 618.0,468.0 619.8,472.9 621.2,477.2 622.0,478.9 622.8,479.3 624.2,479.2 625.8,480.3 627.2,480.3 628.8,480.1 630.2,480.4 631.8,480.8 633.2,481.1 634.8,481.1 636.2,482.0 637.8,482.4 639.2,482.2 640.8,482.4 642.2,482.3 643.8,482.6 645.2,483.0 646.8,483.2 648.2,484.0 650.0,483.7 651.2,483.7 652.8,484.7 654.2,484.5 655.8,484.2 657.2,484.8 658.8,484.4 660.2,485.1 661.8,485.7 663.2,485.7 664.8,485.7 666.2,485.4 667.8,485.7 669.2,485.7 670.8,486.4 672.2,486.3 673.8,486.7 675.2,486.4 676.8,486.5 678.2,487.2 679.8,487.6 681.2,487.6 682.8,487.7 684.2,487.9 685.8,487.9 687.2,487.6 688.7,488.0 690.2,488.0 691.8,487.7 693.2,487.8 694.8,488.2 696.2,488.2 697.8,488.8 699.2,489.1 700.8,488.7 702.2,489.3 703.8,489.4 705.2,489.5 706.8,489.0 708.2,489.0 709.8,489.1 711.2,489.1 712.8,489.2 714.2,489.8 715.8,490.1 717.2,490.2 718.8,489.9 720.0,490.1 721.8,490.3 723.2,489.6 724.8,490.2 726.2,490.5 727.8,490.4 729.2,490.4 730.8,490.1 732.2,489.9 733.8,490.5 735.2,490.0 736.8,490.5 738.2,490.7 739.8,490.2 741.4,490.2 742.8,490.4 744.2,489.9 746.0,489.3 747.2,488.6 748.8,487.7 750.0,487.0 751.8,485.0 753.2,483.3 754.0,482.5 754.8,480.9 756.2,477.6 757.0,476.0 757.8,473.0 759.5,466.0 761.0,445.0 762.2,428.0 763.4,428.5 764.5,438.0 765.5,454.0 766.8,464.0 767.5,470.0 768.2,473.3 770.0,481.0 771.2,486.0 773.0,493.0 774.2,496.5 775.8,500.6 776.5,502.7 777.2,502.8 778.8,502.6 780.2,504.1 781.8,503.1 783.2,503.5 784.8,504.0 786.2,504.8 787.8,504.0 789.2,505.3 790.0,504.5 790.8,504.6 792.2,504.8 793.8,503.9 795.2,504.9 796.8,504.5 798.2,504.3 799.8,506.1 801.2,504.9 802.8,505.7 804.2,506.4 805.8,506.1 807.2,505.8 808.8,506.4 810.2,506.6 811.8,507.2 813.2,505.9 814.8,507.0 816.2,506.5 817.8,506.7 819.2,507.9 820.0,507.4 820.8,507.6 822.2,508.1 823.8,508.6 825.2,507.8 826.8,508.2 828.2,508.2 829.8,508.3 831.2,508.8 832.8,508.4 834.2,508.8 835.8,508.8 837.2,509.9 838.8,509.5 840.2,510.0 841.8,510.3 843.2,509.0 844.8,509.8 846.2,510.7 847.8,510.6 849.2,509.3 850.8,509.4 852.2,510.2 853.8,509.5 855.2,510.0 856.8,509.8 858.2,511.2 860.0,511.6 861.2,512.0 862.8,510.5 864.2,511.9 865.8,511.9 867.2,511.0 868.8,512.7 870.2,513.0 871.8,511.6 873.2,513.3 874.8,512.3 876.2,512.6 877.8,513.8 879.2,513.6 880.8,512.4 882.2,513.1 883.8,513.4 885.2,513.2 886.8,513.0 888.2,513.4 889.8,514.4 891.2,513.1 892.8,514.4 894.2,514.3 895.8,513.6 897.2,514.4 898.8,515.1 900.0,515.0 901.2,514.2 902.2,516.3 903.2,516.0 904.2,516.5 905.2,514.8 906.2,515.3 907.2,514.9 908.2,516.6 909.2,515.7 910.2,515.5 911.2,516.2 912.2,517.4 913.2,517.3 914.2,516.3 915.2,516.2 916.2,517.9 917.2,517.3 918.2,517.7 919.2,516.5 920.2,516.6 921.2,518.1 922.2,517.6 923.2,517.0 924.2,519.0 925.2,518.4 926.2,518.9 927.2,517.5 928.2,519.3 929.2,517.7 930.2,519.5 931.2,518.8 932.2,518.7 933.2,519.3 934.2,520.2 935.2,518.9 936.2,518.8 937.2,519.7 938.2,519.2 939.2,519.1 940.0,519.3 941.2,519.2" fill="none" stroke="#d4d43a" stroke-width="1.8" stroke-linejoin="miter" stroke-miterlimit="10"/><path d="M908.5 458V517.1M993.5 492.5V526.4M1026.4 517.5V531.0M1054.2 521.7V533.0M1247.5 202.6V553.0M1393.5 457.1V564.5M1478 548V567.3M1521 551V568.7M1539 474.9V569.3M1585.7 530V570.8M1623.7 488V572.0M1656.6 541.4V572.6M1684.3 492V572.9M1709.4 523.7V573.1M1731.4 503.4V573.3M1751.4 528V573.4M1769.4 506.6V573.6M1786.3 519.4V573.8M1802.3 512V574.0M1816.3 525.7V574.2M1830 519V574.4M1843.4 524V574.6M1855.1 522V574.7M1866.6 525.7V574.9M1877.2 530.6V575.0M955 517V545.8M993.5 521V535" stroke="#eeee30" stroke-width="2" fill="none"/><path d="M938.5 519.2V520.5M939.5 518.6V520.6M940.5 518.9V521.0M941.5 519.5V521.7M942.5 519.4V521.1M943.5 519.0V521.6M944.5 519.6V521.0M945.5 519.6V521.1M946.5 519.8V521.2M947.5 519.6V521.3M948.5 520.0V522.7M949.5 519.6V521.7M950.5 520.2V521.5M951.5 519.8V521.7M952.5 519.8V522.2M953.5 520.3V523.2M954.5 520.5V522.8M955.5 519.9V522.0M956.5 520.0V523.0M957.5 520.2V522.7M958.5 520.0V522.6M959.5 520.6V522.2M960.5 520.7V524.0M961.5 520.6V523.2M962.5 520.9V522.8M963.5 520.8V523.1M964.5 520.3V522.7M965.5 520.8V523.4M966.5 521.2V523.1M967.5 520.4V525.1M968.5 521.4V523.3M969.5 521.3V523.1M970.5 521.0V523.5M971.5 520.9V524.0M972.5 521.8V523.3M973.5 522.0V524.2M974.5 521.4V524.8M975.5 520.9V524.0M976.5 522.0V523.6M977.5 522.2V524.0M978.5 521.2V525.0M979.5 521.3V524.3M980.5 522.3V524.8M981.5 521.5V524.0M982.5 522.0V525.7M983.5 522.4V524.4M984.5 521.8V524.6M985.5 522.7V524.8M986.5 522.9V524.5M987.5 522.3V524.8M988.5 523.0V524.6M989.5 522.8V525.3M990.5 523.1V525.2M991.5 522.8V526.5M992.5 523.8V525.7M993.5 523.7V527.8M994.5 524.4V527.3M995.5 523.6V527.3M996.5 524.7V528.0M997.5 525.7V528.5M998.5 526.2V528.4M999.5 526.2V528.9M1000.5 527.0V528.9M1001.5 527.2V528.9M1002.5 527.3V529.7M1003.5 527.0V529.3M1004.5 526.8V529.5M1005.5 526.7V529.2M1006.5 526.4V529.6M1007.5 527.1V530.9M1008.5 526.5V530.0M1009.5 526.8V530.4M1010.5 526.9V531.1M1011.5 527.2V529.8M1012.5 526.8V529.7M1013.5 527.2V531.0M1014.5 528.1V531.4M1015.5 528.4V530.2M1016.5 527.9V530.0M1017.5 527.3V530.3M1018.5 528.5V531.1M1019.5 527.8V531.8M1020.5 528.2V530.7M1021.5 528.7V530.7M1022.5 527.9V531.4M1023.5 528.8V530.7M1024.5 528.6V531.6M1025.5 528.6V530.9M1026.5 529.0V531.2M1027.5 528.9V530.9M1028.5 528.4V532.2M1029.5 529.2V531.6M1030.5 529.2V531.2M1031.5 529.3V531.4M1032.5 528.5V532.0M1033.5 528.6V532.6M1034.5 529.6V531.4M1035.5 529.6V532.9M1036.5 528.4V531.6M1037.5 529.7V531.6M1038.5 529.3V532.7M1039.5 529.8V531.8M1040.5 529.7V532.1M1041.5 529.8V532.8M1042.5 528.8V532.2M1043.5 529.1V534.0M1044.5 530.4V532.2M1045.5 530.2V533.7M1046.5 530.0V533.0M1047.5 530.4V532.8M1048.5 529.2V532.5M1049.5 530.7V532.9M1050.5 530.9V534.3M1051.5 529.7V532.7M1052.5 529.7V534.1M1053.5 530.6V533.1M1054.5 529.7V532.9M1055.5 530.0V533.1M1056.5 531.2V533.5M1057.5 531.1V534.8M1058.5 530.5V534.6M1059.5 531.7V533.5M1060.5 531.3V533.6M1061.5 530.8V535.3M1062.5 532.0V535.3M1063.5 532.1V535.9M1064.5 532.2V535.3M1065.5 531.3V534.2M1066.5 532.4V534.7M1067.5 532.1V535.4M1068.5 531.8V536.1M1069.5 532.2V535.4M1070.5 532.2V536.3M1071.5 532.7V536.1M1072.5 532.8V536.1M1073.5 533.2V536.4M1074.5 532.0V536.0M1075.5 532.7V535.6M1076.5 533.1V536.8M1077.5 533.2V535.6M1078.5 533.0V536.0M1079.5 533.7V535.7M1080.5 533.6V537.3M1081.5 533.2V536.3M1082.5 532.5V536.1M1083.5 534.1V538.6M1084.5 534.0V537.0M1085.5 534.4V536.5M1086.5 533.3V539.1M1087.5 533.6V537.0M1088.5 534.6V536.9M1089.5 533.9V536.9M1090.5 534.4V537.1M1091.5 533.5V537.1M1092.5 533.4V538.3M1093.5 535.2V539.0M1094.5 533.5V537.8M1095.5 535.1V538.6M1096.5 534.8V537.6M1097.5 535.2V539.6M1098.5 535.3V538.8M1099.5 535.9V538.6M1100.5 534.4V538.2M1101.5 534.4V538.5M1102.5 535.3V540.7M1103.5 535.9V540.8M1104.5 536.2V539.6M1105.5 536.0V543.1M1106.5 536.3V540.6M1107.5 535.3V541.4M1108.5 535.0V542.5M1109.5 536.4V541.9M1110.5 536.0V541.7M1111.5 536.4V541.7M1112.5 535.7V541.8M1113.5 535.8V542.7M1114.5 536.7V549.8M1115.5 536.2V543.5M1116.5 536.2V546.7M1117.5 536.6V543.4M1118.5 536.9V544.5M1119.5 536.6V548.9M1120.5 536.0V548.5M1121.5 537.0V545.4M1122.5 535.2V547.4M1123.5 537.1V550.8M1124.5 537.4V546.7M1125.5 537.6V545.1M1126.5 536.8V545.6M1127.5 536.5V550.3M1128.5 537.4V544.8M1129.5 536.8V549.8M1130.5 537.8V547.4M1131.5 537.0V547.5M1132.5 537.3V546.0M1133.5 537.3V549.3M1134.5 538.4V547.1M1135.5 537.9V545.4M1136.5 538.0V548.2M1137.5 536.6V545.8M1138.5 538.7V552.9M1139.5 538.5V545.8M1140.5 538.6V546.3M1141.5 538.4V546.3M1142.5 539.1V550.5M1143.5 538.5V546.5M1144.5 537.7V551.2M1145.5 539.3V551.6M1146.5 539.1V547.0M1147.5 538.3V547.2M1148.5 539.2V549.7M1149.5 538.0V546.9M1150.5 539.0V552.2M1151.5 538.9V547.5M1152.5 538.6V548.0M1153.5 540.0V553.5M1154.5 538.3V552.2M1155.5 539.6V551.7M1156.5 540.2V548.1M1157.5 539.9V548.0M1158.5 538.8V548.0M1159.5 539.6V553.5M1160.5 539.1V551.2M1161.5 538.7V549.0M1162.5 539.0V548.4M1163.5 539.2V549.4M1164.5 541.0V549.9M1165.5 541.0V554.1M1166.5 540.6V556.6M1167.5 541.1V549.6M1168.5 541.4V553.1M1169.5 541.3V549.2M1170.5 540.6V554.2M1171.5 540.7V553.2M1172.5 540.7V551.1M1173.5 541.9V554.4M1174.5 540.3V554.7M1175.5 541.6V550.6M1176.5 542.2V555.4M1177.5 540.2V555.7M1178.5 540.0V551.9M1179.5 542.3V553.1M1180.5 540.2V550.5M1181.5 541.3V551.0M1182.5 541.2V554.8M1183.5 541.8V554.8M1184.5 540.5V557.7M1185.5 543.0V551.7M1186.5 542.5V551.2M1187.5 542.0V551.4M1188.5 542.2V552.7M1189.5 541.8V554.0M1190.5 542.2V557.4M1191.5 541.8V554.6M1192.5 543.2V555.7M1193.5 543.5V552.0M1194.5 542.1V565.1M1195.5 543.0V552.7M1196.5 541.8V553.2M1197.5 543.9V557.1M1198.5 543.0V554.2M1199.5 542.6V554.3M1200.5 544.2V555.5M1201.5 543.8V555.6M1202.5 543.2V553.9M1203.5 544.4V553.0M1204.5 543.5V558.4M1205.5 543.9V560.4M1206.5 543.8V553.8M1207.5 543.2V559.2M1208.5 544.6V553.7M1209.5 542.9V555.2M1210.5 544.0V554.8M1211.5 544.2V557.2M1212.5 544.5V554.0M1213.5 545.1V554.4M1214.5 543.3V554.0M1215.5 542.7V554.1M1216.5 544.1V554.8M1217.5 545.1V554.7M1218.5 543.3V554.5M1219.5 545.5V562.4M1220.5 543.4V554.6M1221.5 543.7V558.0M1222.5 545.1V558.1M1223.5 544.4V557.3M1224.5 545.3V555.0M1225.5 545.8V556.9M1226.5 543.3V555.0M1227.5 545.4V555.7M1228.5 543.4V564.7M1229.5 543.9V555.3M1230.5 546.2V561.4M1231.5 544.3V557.8M1232.5 546.2V558.4M1233.5 545.0V555.9M1234.5 545.7V556.3M1235.5 544.7V558.8M1236.5 546.1V567.5M1237.5 544.5V565.4M1238.5 546.5V556.3M1239.5 546.4V564.8M1240.5 546.8V560.9M1241.5 545.5V557.5M1242.5 544.4V558.5M1243.5 547.0V565.7M1244.5 546.9V566.4M1245.5 547.1V559.9M1246.5 547.1V564.1M1247.5 546.5V559.0M1248.5 547.2V560.1M1249.5 545.8V557.2M1250.5 546.9V564.0M1251.5 545.8V558.2M1252.5 544.8V563.5M1253.5 547.6V559.8M1254.5 547.1V561.2M1255.5 547.2V563.6M1256.5 545.3V561.4M1257.5 547.8V561.6M1258.5 547.1V566.4M1259.5 547.4V567.0M1260.5 548.0V561.3M1261.5 547.4V560.7M1262.5 547.9V559.7M1263.5 547.3V565.3M1264.5 548.1V563.2M1265.5 547.7V559.4M1266.5 548.0V566.6M1267.5 547.5V560.9M1268.5 546.8V566.5M1269.5 548.1V560.6M1270.5 545.9V564.3M1271.5 547.3V562.7M1272.5 547.1V564.5M1273.5 547.3V567.7M1274.5 547.1V562.6M1275.5 548.4V565.5M1276.5 548.4V561.5M1277.5 548.1V561.0M1278.5 548.4V561.6M1279.5 548.2V563.0M1280.5 547.1V566.9M1281.5 546.8V566.0M1282.5 547.6V562.8M1283.5 548.0V561.6M1284.5 546.8V564.7M1285.5 549.0V563.4M1286.5 548.9V562.3M1287.5 548.8V567.2M1288.5 547.7V563.2M1289.5 547.7V570.9M1290.5 549.6V563.4M1291.5 548.7V564.5M1292.5 549.9V562.7M1293.5 550.0V562.1M1294.5 549.9V563.6M1295.5 549.3V571.6M1296.5 550.1V567.2M1297.5 549.4V568.3M1298.5 550.3V567.5M1299.5 550.3V562.5M1300.5 550.1V563.8M1301.5 549.4V571.4M1302.5 550.5V570.9M1303.5 548.6V563.0M1304.5 547.9V562.8M1305.5 550.4V570.1M1306.5 550.7V563.7M1307.5 549.9V562.8M1308.5 550.9V562.9M1309.5 548.7V563.5M1310.5 551.0V567.7M1311.5 551.0V564.8M1312.5 550.8V568.2M1313.5 548.4V565.5M1314.5 549.7V563.9M1315.5 551.1V566.9M1316.5 550.6V566.2M1317.5 550.1V566.6M1318.5 551.4V570.9M1319.5 550.6V564.9M1320.5 551.3V564.3M1321.5 551.2V572.4M1322.5 551.7V571.3M1323.5 551.3V568.3M1324.5 551.5V568.0M1325.5 550.2V572.6M1326.5 551.7V570.4M1327.5 549.8V567.6M1328.5 550.6V573.1M1329.5 552.2V572.1M1330.5 552.2V571.1M1331.5 552.3V569.6M1332.5 552.1V565.2M1333.5 550.9V570.5M1334.5 552.5V570.0M1335.5 552.5V577.8M1336.5 551.6V575.1M1337.5 552.6V566.7M1338.5 552.7V570.5M1339.5 551.9V567.5M1340.5 550.3V566.0M1341.5 551.9V571.6M1342.5 552.3V571.8M1343.5 552.6V571.1M1344.5 552.4V566.4M1345.5 553.0V574.6M1346.5 551.5V576.4M1347.5 549.8V566.8M1348.5 552.0V575.6M1349.5 553.3V566.8M1350.5 553.3V570.7M1351.5 551.5V573.8M1352.5 551.3V567.9M1353.5 551.3V573.7M1354.5 552.0V575.6M1355.5 553.7V568.1M1356.5 553.7V569.2M1357.5 550.5V567.8M1358.5 551.9V569.2M1359.5 553.4V568.7M1360.5 551.3V568.0M1361.5 553.7V568.2M1362.5 551.0V576.5M1363.5 552.9V581.3M1364.5 553.2V577.6M1365.5 553.9V580.4M1366.5 554.4V572.6M1367.5 553.5V571.5M1368.5 551.8V571.4M1369.5 554.6V571.3M1370.5 554.5V571.9M1371.5 554.7V570.4M1372.5 553.7V574.0M1373.5 553.1V569.4M1374.5 551.7V572.2M1375.5 552.7V569.7M1376.5 554.7V574.3M1377.5 552.5V572.4M1378.5 553.2V570.6M1379.5 555.1V570.9M1380.5 555.2V573.2M1381.5 555.3V578.7M1382.5 554.7V577.1M1383.5 555.2V576.5M1384.5 553.9V571.4M1385.5 552.2V576.8M1386.5 553.3V578.1M1387.5 554.1V571.8M1388.5 555.2V578.3M1389.5 555.6V578.9M1390.5 555.4V572.7M1391.5 553.9V574.0M1392.5 556.0V571.2M1393.5 555.1V571.6M1394.5 552.6V571.1M1395.5 553.9V575.0M1396.5 553.8V579.0M1397.5 554.0V576.7M1398.5 555.0V577.7M1399.5 555.3V572.5M1400.5 556.0V571.4M1401.5 555.0V572.2M1402.5 555.8V576.7M1403.5 553.2V574.8M1404.5 552.7V572.7M1405.5 556.1V573.8M1406.5 556.2V571.9M1407.5 555.6V572.1M1408.5 556.1V577.2M1409.5 553.9V579.8M1410.5 555.2V579.8M1411.5 555.9V577.6M1412.5 555.9V572.0M1413.5 555.9V574.3M1414.5 556.3V581.1M1415.5 555.0V577.4M1416.5 556.2V578.2M1417.5 555.3V575.6M1418.5 556.0V577.8M1419.5 554.2V573.2M1420.5 556.1V575.0M1421.5 555.6V576.7M1422.5 554.9V578.3M1423.5 555.5V575.5M1424.5 556.3V572.9M1425.5 556.4V578.9M1426.5 555.0V573.8M1427.5 553.6V572.9M1428.5 555.9V586.9M1429.5 553.3V576.7M1430.5 555.8V573.4M1431.5 556.2V583.6M1432.5 553.9V581.0M1433.5 556.3V574.1M1434.5 554.9V576.6M1435.5 556.4V581.4M1436.5 556.5V581.1M1437.5 556.5V591.6M1438.5 556.6V573.6M1439.5 553.6V578.6M1440.5 554.3V579.9M1441.5 556.0V582.2M1442.5 556.6V575.8M1443.5 555.0V573.8M1444.5 556.2V576.0M1445.5 553.4V582.0M1446.5 556.5V579.8M1447.5 556.3V573.8M1448.5 555.7V578.7M1449.5 556.2V574.8M1450.5 556.2V575.5M1451.5 555.5V583.2M1452.5 556.6V574.4M1453.5 553.9V574.2M1454.5 553.1V575.1M1455.5 555.9V577.7M1456.5 554.9V575.6M1457.5 555.5V579.0M1458.5 556.7V578.1M1459.5 555.0V577.1M1460.5 553.8V577.2M1461.5 556.7V574.8M1462.5 554.5V583.2M1463.5 554.5V581.7M1464.5 556.9V575.9M1465.5 556.9V576.2M1466.5 556.2V581.5M1467.5 556.5V577.5M1468.5 556.5V574.9M1469.5 556.9V580.3M1470.5 554.5V575.1M1471.5 556.4V581.7M1472.5 556.4V576.4M1473.5 555.6V582.1M1474.5 554.0V575.5M1475.5 555.5V576.3M1476.5 556.1V577.7M1477.5 555.9V577.4M1478.5 556.3V584.0M1479.5 554.7V580.1M1480.5 555.5V578.6M1481.5 557.0V575.7M1482.5 555.1V585.9M1483.5 557.2V580.6M1484.5 554.8V583.9M1485.5 557.2V586.6M1486.5 557.0V583.8M1487.5 557.2V576.7M1488.5 557.0V582.6M1489.5 556.4V579.4M1490.5 554.3V584.2M1491.5 556.2V577.1M1492.5 555.5V583.0M1493.5 556.6V590.3M1494.5 554.7V576.3M1495.5 556.2V583.2M1496.5 557.1V576.8M1497.5 557.2V576.5M1498.5 556.8V581.0M1499.5 557.3V576.6M1500.5 557.1V577.1M1501.5 557.4V585.8M1502.5 553.2V587.4M1503.5 557.3V579.7M1504.5 556.8V581.6M1505.5 554.4V588.0M1506.5 557.1V582.9M1507.5 556.7V585.1M1508.5 557.5V577.7M1509.5 554.4V577.1M1510.5 554.3V586.8M1511.5 555.6V577.4M1512.5 556.4V577.3M1513.5 556.8V577.3M1514.5 557.5V580.7M1515.5 557.5V577.6M1516.5 554.9V579.7M1517.5 557.6V579.9M1518.5 557.6V580.4M1519.5 557.1V577.9M1520.5 556.8V595.1M1521.5 556.5V582.7M1522.5 557.5V577.7M1523.5 554.8V577.8M1524.5 555.5V588.0M1525.5 557.7V581.8M1526.5 552.2V580.0M1527.5 557.2V578.1M1528.5 557.7V579.1M1529.5 557.4V588.8M1530.5 556.9V584.7M1531.5 557.7V582.2M1532.5 556.0V579.4M1533.5 555.8V578.4M1534.5 555.8V585.9M1535.5 555.4V585.1M1536.5 556.9V588.5M1537.5 557.7V586.2M1538.5 557.7V581.0M1539.5 557.4V585.3M1540.5 555.4V580.2M1541.5 557.5V582.4M1542.5 557.1V578.8M1543.5 556.6V580.9M1544.5 555.4V582.9M1545.5 556.2V580.8M1546.5 556.3V579.0M1547.5 554.7V580.3M1548.5 555.1V580.6M1549.5 554.5V579.4M1550.5 558.1V579.4M1551.5 557.8V580.4M1552.5 557.1V580.6M1553.5 558.1V583.4M1554.5 556.5V583.6M1555.5 555.1V581.9M1556.5 555.6V584.5M1557.5 553.4V585.3M1558.5 554.8V588.5M1559.5 558.2V581.1M1560.5 556.1V580.5M1561.5 556.7V586.9M1562.5 556.4V584.9M1563.5 555.7V586.8M1564.5 555.4V580.1M1565.5 558.2V580.8M1566.5 558.1V580.9M1567.5 557.6V580.1M1568.5 554.9V580.7M1569.5 555.7V584.5M1570.5 556.2V582.4M1571.5 558.0V581.5M1572.5 556.9V580.9M1573.5 557.2V581.5M1574.5 558.3V583.5M1575.5 556.0V580.6M1576.5 556.9V585.7M1577.5 556.4V581.7M1578.5 558.3V589.2M1579.5 555.4V580.8M1580.5 557.5V588.9M1581.5 557.2V581.5M1582.5 558.4V585.7M1583.5 555.5V587.0M1584.5 558.4V586.3M1585.5 558.5V584.8M1586.5 558.3V581.1M1587.5 558.1V586.4M1588.5 558.5V585.4M1589.5 554.9V584.4M1590.5 558.4V585.5M1591.5 558.4V588.3M1592.5 555.3V581.4M1593.5 558.6V585.6M1594.5 557.6V585.1M1595.5 556.2V592.3M1596.5 557.8V581.7M1597.5 557.9V582.7M1598.5 558.5V587.6M1599.5 556.8V582.0M1600.5 555.2V588.0M1601.5 553.7V581.8M1602.5 557.2V582.5M1603.5 555.1V587.4M1604.5 556.3V584.1M1605.5 556.5V584.3M1606.5 557.9V589.7M1607.5 554.7V582.5M1608.5 555.5V593.5M1609.5 554.8V590.3M1610.5 558.3V582.3M1611.5 558.8V591.5M1612.5 557.4V591.4M1613.5 558.6V592.0M1614.5 558.8V582.8M1615.5 557.0V592.3M1616.5 558.3V587.5M1617.5 557.1V584.9M1618.5 558.9V583.2M1619.5 556.6V590.5M1620.5 557.7V594.1M1621.5 555.7V583.3M1622.5 553.0V583.5M1623.5 555.5V588.6M1624.5 558.0V583.1M1625.5 559.0V591.4M1626.5 557.6V586.9M1627.5 555.1V583.9M1628.5 556.5V590.7M1629.5 558.9V585.1M1630.5 558.6V583.4M1631.5 559.1V584.7M1632.5 556.4V594.8M1633.5 557.3V587.3M1634.5 557.7V588.1M1635.5 553.4V591.7M1636.5 558.5V592.6M1637.5 557.3V584.3M1638.5 559.1V585.7M1639.5 557.0V591.9M1640.5 559.0V590.5M1641.5 558.8V590.6M1642.5 558.2V583.9M1643.5 558.7V586.9M1644.5 557.6V586.9M1645.5 557.4V595.1M1646.5 556.1V583.9M1647.5 559.1V585.8M1648.5 554.4V584.5M1649.5 559.0V595.1M1650.5 557.9V589.3M1651.5 559.3V585.2M1652.5 555.7V589.3M1653.5 559.2V584.8M1654.5 557.3V584.0M1655.5 559.3V592.0M1656.5 557.6V589.5M1657.5 557.7V587.8M1658.5 559.3V595.7M1659.5 559.1V592.9M1660.5 558.8V590.0M1661.5 558.8V587.0M1662.5 559.0V585.5M1663.5 559.1V585.6M1664.5 556.5V584.1M1665.5 559.3V586.1M1666.5 559.3V584.2M1667.5 558.6V590.1M1668.5 558.2V584.2M1669.5 556.5V595.4M1670.5 558.3V584.7M1671.5 559.3V584.8M1672.5 559.4V586.3M1673.5 558.9V584.3M1674.5 557.2V589.0M1675.5 558.3V584.7M1676.5 559.3V591.8M1677.5 558.9V594.1M1678.5 554.2V584.3M1679.5 559.3V590.8M1680.5 557.7V584.3M1681.5 558.4V595.3M1682.5 559.3V592.6M1683.5 559.2V595.6M1684.5 557.7V584.3M1685.5 559.4V588.4M1686.5 557.5V584.5M1687.5 559.4V584.5M1688.5 559.4V584.9M1689.5 558.8V593.9M1690.5 559.2V595.3M1691.5 559.4V584.4M1692.5 556.6V586.2M1693.5 557.9V587.3M1694.5 558.2V592.1M1695.5 559.5V594.3M1696.5 559.3V585.0M1697.5 559.5V590.9M1698.5 557.1V584.5M1699.5 557.9V584.8M1700.5 558.8V595.9M1701.5 556.4V585.0M1702.5 557.3V584.6M1703.5 559.5V584.7M1704.5 558.3V595.5M1705.5 556.1V584.8M1706.5 559.0V596.1M1707.5 558.0V590.4M1708.5 559.2V585.2M1709.5 554.3V588.5M1710.5 559.3V589.5M1711.5 559.2V585.3M1712.5 559.5V595.5M1713.5 558.6V585.7M1714.5 559.6V584.7M1715.5 557.7V585.3M1716.5 558.7V585.0M1717.5 559.5V590.3M1718.5 557.2V592.5M1719.5 557.7V592.5M1720.5 557.9V588.3M1721.5 559.6V589.4M1722.5 558.6V599.4M1723.5 558.1V590.4M1724.5 559.3V589.9M1725.5 557.4V593.1M1726.5 559.3V585.8M1727.5 559.6V584.8M1728.5 556.7V587.1M1729.5 558.6V586.2M1730.5 559.6V584.9M1731.5 558.0V585.3M1732.5 557.4V586.3M1733.5 558.2V584.9M1734.5 559.7V597.1M1735.5 558.2V594.4M1736.5 559.7V586.5M1737.5 559.4V592.1M1738.5 559.6V588.1M1739.5 557.5V586.9M1740.5 556.1V585.0M1741.5 556.6V587.4M1742.5 558.9V591.1M1743.5 556.2V585.1M1744.5 559.5V587.4M1745.5 559.4V585.3M1746.5 559.1V593.4M1747.5 557.5V589.3M1748.5 557.0V593.3M1749.5 559.3V586.6M1750.5 559.1V589.8M1751.5 556.5V593.1M1752.5 557.2V585.7M1753.5 559.7V588.4M1754.5 557.1V594.1M1755.5 557.7V590.6M1756.5 558.7V587.4M1757.5 556.9V585.6M1758.5 559.4V585.1M1759.5 559.8V591.9M1760.5 557.4V596.9M1761.5 559.0V595.5M1762.5 558.6V585.3M1763.5 559.0V587.1M1764.5 559.4V586.6M1765.5 556.7V585.2M1766.5 559.2V585.3M1767.5 559.4V585.7M1768.5 556.9V598.1M1769.5 556.6V585.7M1770.5 559.8V588.8M1771.5 556.4V598.4M1772.5 556.7V588.9M1773.5 556.7V593.0M1774.5 556.4V588.4M1775.5 558.4V593.5M1776.5 559.7V587.4M1777.5 560.0V586.7M1778.5 559.8V588.5M1779.5 559.9V589.5M1780.5 558.1V586.2M1781.5 556.6V587.7M1782.5 558.3V585.7M1783.5 559.6V592.9M1784.5 559.4V590.1M1785.5 560.1V585.9M1786.5 559.2V587.7M1787.5 559.2V586.0M1788.5 560.1V591.7M1789.5 559.4V586.9M1790.5 557.2V599.1M1791.5 558.6V596.7M1792.5 559.0V591.0M1793.5 559.7V595.0M1794.5 559.7V597.4M1795.5 558.2V596.2M1796.5 559.2V587.2M1797.5 556.8V590.7M1798.5 558.8V593.6M1799.5 559.7V596.7M1800.5 556.0V586.0M1801.5 557.7V586.0M1802.5 558.2V592.3M1803.5 556.9V585.9M1804.5 558.1V595.4M1805.5 556.8V590.2M1806.5 560.3V592.2M1807.5 560.2V590.4M1808.5 556.6V588.1M1809.5 556.6V599.2M1810.5 560.2V587.3M1811.5 558.5V586.0M1812.5 559.6V596.2M1813.5 556.9V595.6M1814.5 557.2V587.6M1815.5 559.3V586.0M1816.5 559.1V592.8M1817.5 557.0V590.7M1818.5 557.2V594.2M1819.5 558.6V587.2M1820.5 560.3V595.7M1821.5 560.4V597.7M1822.5 559.2V597.1M1823.5 560.4V593.9M1824.5 557.5V588.4M1825.5 558.8V586.3M1826.5 558.8V587.0M1827.5 556.6V588.3M1828.5 559.7V596.1M1829.5 560.5V593.4M1830.5 556.7V589.8M1831.5 557.7V586.9M1832.5 557.7V604.2M1833.5 558.5V587.6M1834.5 557.9V586.4M1835.5 560.5V598.0M1836.5 557.3V586.8M1837.5 558.3V591.3M1838.5 560.6V597.6M1839.5 560.4V588.9M1840.5 560.5V592.3M1841.5 560.6V589.0M1842.5 559.4V594.0M1843.5 560.1V599.0M1844.5 557.0V588.2M1845.5 560.5V586.6M1846.5 557.1V592.5M1847.5 559.5V596.5M1848.5 560.4V599.4M1849.5 560.7V590.3M1850.5 557.9V592.3M1851.5 558.9V597.6M1852.5 560.4V597.6M1853.5 558.1V586.6M1854.5 560.7V598.5M1855.5 560.4V599.5M1856.5 558.0V599.9M1857.5 560.7V588.2M1858.5 556.9V591.6M1859.5 559.6V588.2M1860.5 560.7V586.9M1861.5 559.8V590.8M1862.5 560.8V586.8M1863.5 560.6V595.8M1864.5 560.3V588.0M1865.5 558.1V589.2M1866.5 560.8V586.9M1867.5 559.2V588.9M1868.5 560.7V587.1M1869.5 558.9V589.0M1870.5 558.1V592.2M1871.5 559.9V588.2M1872.5 559.9V587.2M1873.5 560.9V603.8M1874.5 560.9V593.1M1875.5 559.2V587.5M1876.5 560.9V587.0M1877.5 561.0V590.1" stroke="#ffff00" stroke-width="1.05" fill="none"/><rect x="1242" y="169.4" width="12.2" height="15.7" fill="#e68ae9"/><text x="1244.37" y="181.45" font-family="Liberation Sans" font-size="12.21" font-weight="bold" fill="#141414" text-anchor="start" textLength="7.48" lengthAdjust="spacingAndGlyphs" stroke="#141414" stroke-width="0.5">0</text><rect x="756.6" y="393.3" width="12.2" height="15.2" fill="#e68ae9"/><text x="758.63" y="405.1" font-family="Liberation Sans" font-size="12.21" font-weight="bold" fill="#141414" text-anchor="start" textLength="7.65" lengthAdjust="spacingAndGlyphs" stroke="#141414" stroke-width="0.5">1</text><rect x="902.9" y="422.9" width="12.6" height="16.6" fill="#e68ae9"/><text x="905.54" y="435.4" font-family="Liberation Sans" font-size="12.21" font-weight="bold" fill="#141414" text-anchor="start" textLength="7.39" lengthAdjust="spacingAndGlyphs" stroke="#141414" stroke-width="0.5">2</text><rect x="1387" y="422.9" width="13" height="16.5" fill="#e68ae9"/><text x="1390.0" y="435.35" font-family="Liberation Sans" font-size="12.21" font-weight="bold" fill="#141414" text-anchor="start" textLength="7.16" lengthAdjust="spacingAndGlyphs" stroke="#141414" stroke-width="0.5">3</text><rect x="1534.3" y="440.6" width="10.7" height="16.5" fill="#e68ae9"/><text x="1536.27" y="453.05" font-family="Liberation Sans" font-size="12.21" font-weight="bold" fill="#141414" text-anchor="start" textLength="6.65" lengthAdjust="spacingAndGlyphs" stroke="#141414" stroke-width="0.5">4</text><rect x="1242.8" y="662.9" width="9.7" height="13" fill="#1a9c1a"/><text x="1244.27" y="673.5" font-family="Liberation Sans" font-size="11.63" font-weight="bold" fill="#0b5e0b" text-anchor="start" textLength="6.62" lengthAdjust="spacingAndGlyphs" >F</text><rect x="467" y="131" width="150" height="41" fill="#000"/><text x="468.77" y="142.7" font-family="Liberation Mono" font-size="12.14" font-weight="bold" fill="#eca42a" text-anchor="start" textLength="145.58" lengthAdjust="spacingAndGlyphs" >Input&#160;Gain:&#160;-12,0&#160;dB</text><text x="467.79" y="156" font-family="Liberation Mono" font-size="12.14" font-weight="bold" fill="#eca42a" text-anchor="start" textLength="45.22" lengthAdjust="spacingAndGlyphs" >Mute&#160;R</text><text x="469.28" y="168.8" font-family="Liberation Mono" font-size="12.14" font-weight="bold" fill="#eca42a" text-anchor="start" textLength="137.48" lengthAdjust="spacingAndGlyphs" >Output&#160;Gain:&#160;6,0&#160;dB</text><rect x="1297" y="176" width="478" height="169" fill="#000" fill-opacity="0.8"/><text x="1300.4" y="190.7" font-family="Liberation Mono" font-size="19.0" font-weight="normal" fill="#e88ce8" stroke="#e88ce8" stroke-width="0.55" textLength="468.3" lengthAdjust="spacingAndGlyphs">&#160;&#160;&#160;&#160;Freq&#160;&#160;&#160;&#160;&#160;&#160;&#160;Amp&#160;(dBV)&#160;&#160;Amp&#160;(dBc)</text><path d="M1302.40 208.5h9.7M1315.78 208.5h9.7M1329.16 208.5h9.7M1342.54 208.5h9.7M1355.92 208.5h9.7M1369.30 208.5h9.7M1382.68 208.5h9.7M1396.06 208.5h9.7M1409.44 208.5h9.7M1422.82 208.5h9.7M1436.20 208.5h9.7M1449.58 208.5h9.7M1462.96 208.5h9.7M1476.34 208.5h9.7M1489.72 208.5h9.7M1503.10 208.5h9.7M1516.48 208.5h9.7M1529.86 208.5h9.7M1543.24 208.5h9.7M1556.62 208.5h9.7M1570.00 208.5h9.7M1583.38 208.5h9.7M1596.76 208.5h9.7M1610.14 208.5h9.7M1623.52 208.5h9.7M1636.90 208.5h9.7M1650.28 208.5h9.7M1663.66 208.5h9.7M1677.04 208.5h9.7M1690.42 208.5h9.7M1703.80 208.5h9.7M1717.18 208.5h9.7M1730.56 208.5h9.7M1743.94 208.5h9.7M1757.32 208.5h9.7" stroke="#e88ce8" stroke-width="2.4" fill="none"/><text x="1300.4" y="240.8" font-family="Liberation Mono" font-size="19.0" font-weight="normal" fill="#e88ce8" stroke="#e88ce8" stroke-width="0.55" textLength="388.02" lengthAdjust="spacingAndGlyphs">0.&#160;&#160;999,7&#160;Hz&#160;&#160;&#160;9,26&#160;&#160;&#160;&#160;&#160;&#160;&#160;---</text><text x="1300.4" y="265.4" font-family="Liberation Mono" font-size="19.0" font-weight="normal" fill="#e88ce8" stroke="#e88ce8" stroke-width="0.55" textLength="428.16" lengthAdjust="spacingAndGlyphs">1.&#160;&#160;99,60&#160;Hz&#160;&#160;&#160;-68,95&#160;&#160;&#160;&#160;&#160;-78,22</text><text x="1300.4" y="289.9" font-family="Liberation Mono" font-size="19.0" font-weight="normal" fill="#e88ce8" stroke="#e88ce8" stroke-width="0.55" textLength="428.16" lengthAdjust="spacingAndGlyphs">2.&#160;&#160;199,9&#160;Hz&#160;&#160;&#160;-79,62&#160;&#160;&#160;&#160;&#160;-88,88</text><text x="1300.4" y="314.5" font-family="Liberation Mono" font-size="19.0" font-weight="normal" fill="#e88ce8" stroke="#e88ce8" stroke-width="0.55" textLength="428.16" lengthAdjust="spacingAndGlyphs">3.&#160;&#160;1,999&#160;kHz&#160;&#160;-79,70&#160;&#160;&#160;&#160;&#160;-88,96</text><text x="1300.4" y="339.0" font-family="Liberation Mono" font-size="19.0" font-weight="normal" fill="#e88ce8" stroke="#e88ce8" stroke-width="0.55" textLength="428.16" lengthAdjust="spacingAndGlyphs">4.&#160;&#160;3,999&#160;kHz&#160;&#160;-85,83&#160;&#160;&#160;&#160;&#160;-95,09</text><rect x="1690.3" y="123.2" width="152.6" height="27.3" rx="3" fill="#fff"/><path d="M1758.2 123.2H1693.3Q1690.3 123.2 1690.3 126.2V147.5Q1690.3 150.5 1693.3 150.5H1758.2Z" fill="#000" stroke="#fff" stroke-width="1.2"/><text x="1692.08" y="143" font-family="Liberation Sans" font-size="24.71" font-weight="normal" fill="#dcdcdc" text-anchor="start" textLength="64.6" lengthAdjust="spacingAndGlyphs" >Quant</text><text x="1761.55" y="143" font-family="Liberation Sans" font-size="24.71" font-weight="normal" fill="#000" text-anchor="start" textLength="80.06" lengthAdjust="spacingAndGlyphs" >Asylum</text><text x="1712.61" y="170" font-family="Liberation Sans" font-size="17.3" font-weight="normal" fill="#fff" text-anchor="start" textLength="106.31" lengthAdjust="spacingAndGlyphs" >QA40x&#160;v1.201</text></svg>
<div style="position:absolute;left:355.8px;top:53px;width:152.2px;height:50.8px;background:#d4d4d4;box-sizing:border-box;border-top:1px solid #fff;border-left:1px solid #fff"></div>
<div style="position:absolute;left:356.8px;top:54px;width:151.2px;height:19.4px;background:#efefef"></div>
<div style="position:absolute;left:510.45px;top:53px;width:152.2px;height:50.8px;background:#f9f8d4;box-sizing:border-box;border-top:1px solid #fff;border-left:1px solid #fff"></div>
<div style="position:absolute;left:511.45px;top:54px;width:151.2px;height:19.4px;background:#efefef"></div>
<div style="position:absolute;left:665.1px;top:53px;width:152.2px;height:50.8px;background:#f9f8d4;box-sizing:border-box;border-top:1px solid #fff;border-left:1px solid #fff"></div>
<div style="position:absolute;left:666.1px;top:54px;width:151.2px;height:19.4px;background:#efefef"></div>
<div style="position:absolute;left:819.75px;top:53px;width:152.2px;height:50.8px;background:#f9f8d4;box-sizing:border-box;border-top:1px solid #fff;border-left:1px solid #fff"></div>
<div style="position:absolute;left:820.75px;top:54px;width:151.2px;height:19.4px;background:#efefef"></div>
<div style="position:absolute;left:974.4px;top:53px;width:152.2px;height:50.8px;background:#f9f8d4;box-sizing:border-box;border-top:1px solid #fff;border-left:1px solid #fff"></div>
<div style="position:absolute;left:975.4px;top:54px;width:151.2px;height:19.4px;background:#efefef"></div>
<div style="position:absolute;left:1129.05px;top:53px;width:152.2px;height:50.8px;background:#d4d4d4;box-sizing:border-box;border-top:1px solid #fff;border-left:1px solid #fff"></div>
<div style="position:absolute;left:1130.05px;top:54px;width:151.2px;height:19.4px;background:#efefef"></div>
<div style="position:absolute;left:1283.7px;top:53px;width:152.2px;height:50.8px;background:#d4d4d4;box-sizing:border-box;border-top:1px solid #fff;border-left:1px solid #fff"></div>
<div style="position:absolute;left:1284.7px;top:54px;width:151.2px;height:19.4px;background:#efefef"></div>
<svg width="1920" height="770" style="z-index:4"><text x="361.74" y="68.6" font-family="Liberation Sans" font-size="15.12" font-weight="bold" fill="#101010" text-anchor="start" textLength="62.83" lengthAdjust="spacingAndGlyphs" >Sys:FFT</text><text x="360.73" y="93.9" font-family="Liberation Sans" font-size="19.7" font-weight="normal" fill="#181818" text-anchor="start" textLength="41.74" lengthAdjust="spacingAndGlyphs" >128k</text><path d="M485.8 61.5h8.4M485.8 65.1h8.4M485.8 68.8h8.4" stroke="#5e5e5e" stroke-width="2.8"/><rect x="496.1" y="58.6" width="11.6" height="12.8" fill="#cbcbcb"/><path d="M498.2 60.2L506.4 70M506.4 60.2L498.2 70" stroke="#333" stroke-width="2.1"/><text x="515.44" y="68.6" font-family="Liberation Sans" font-size="15.12" font-weight="bold" fill="#101010" text-anchor="start" textLength="82.4" lengthAdjust="spacingAndGlyphs" >L:&#160;Pk&#160;Vrms</text><text x="514.64" y="93.9" font-family="Liberation Sans" font-size="19.7" font-weight="normal" fill="#181818" text-anchor="start" textLength="97.55" lengthAdjust="spacingAndGlyphs" >2,905&#160;Vrms</text><path d="M640.5 61.5h8.4M640.5 65.1h8.4M640.5 68.8h8.4" stroke="#5e5e5e" stroke-width="2.8"/><rect x="650.8" y="58.6" width="11.6" height="12.8" fill="#cbcbcb"/><path d="M652.9 60.2L661.1 70M661.1 60.2L652.9 70" stroke="#333" stroke-width="2.1"/><text x="670.33" y="68.6" font-family="Liberation Sans" font-size="15.12" font-weight="bold" fill="#101010" text-anchor="start" textLength="120.52" lengthAdjust="spacingAndGlyphs" >L:&#160;Pk&#160;Pwr&#160;Watts</text><text x="669.9" y="93.9" font-family="Liberation Sans" font-size="19.7" font-weight="normal" fill="#181818" text-anchor="start" textLength="123.02" lengthAdjust="spacingAndGlyphs" >1,00&#160;W&#160;(8,4Ω)</text><path d="M795.1 61.5h8.4M795.1 65.1h8.4M795.1 68.8h8.4" stroke="#5e5e5e" stroke-width="2.8"/><rect x="805.4" y="58.6" width="11.6" height="12.8" fill="#cbcbcb"/><path d="M807.5 60.2L815.7 70M815.7 60.2L807.5 70" stroke="#333" stroke-width="2.1"/><text x="825.91" y="68.6" font-family="Liberation Sans" font-size="15.12" font-weight="bold" fill="#101010" text-anchor="start" textLength="72.73" lengthAdjust="spacingAndGlyphs" >L:&#160;THD&#160;%</text><text x="825.35" y="93.9" font-family="Liberation Sans" font-size="19.7" font-weight="normal" fill="#181818" text-anchor="start" textLength="86.43" lengthAdjust="spacingAndGlyphs" >0,00434%</text><path d="M949.8 61.5h8.4M949.8 65.1h8.4M949.8 68.8h8.4" stroke="#5e5e5e" stroke-width="2.8"/><rect x="960.0" y="58.6" width="11.6" height="12.8" fill="#cbcbcb"/><path d="M962.1 60.2L970.4 70M970.4 60.2L962.1 70" stroke="#333" stroke-width="2.1"/><text x="979.89" y="68.6" font-family="Liberation Sans" font-size="15.12" font-weight="bold" fill="#101010" text-anchor="start" textLength="95.04" lengthAdjust="spacingAndGlyphs" >L:&#160;THD+N&#160;%</text><text x="980.25" y="93.9" font-family="Liberation Sans" font-size="19.7" font-weight="normal" fill="#181818" text-anchor="start" textLength="86.03" lengthAdjust="spacingAndGlyphs" >0,02756%</text><path d="M1104.4 61.5h8.4M1104.4 65.1h8.4M1104.4 68.8h8.4" stroke="#5e5e5e" stroke-width="2.8"/><rect x="1114.7" y="58.6" width="11.6" height="12.8" fill="#cbcbcb"/><path d="M1116.8 60.2L1125.0 70M1125.0 60.2L1116.8 70" stroke="#333" stroke-width="2.1"/><text x="1135.55" y="68.6" font-family="Liberation Sans" font-size="15.12" font-weight="bold" fill="#101010" text-anchor="start" textLength="71.48" lengthAdjust="spacingAndGlyphs" >Sys:Gen1</text><text x="1132.51" y="86.6" font-family="Liberation Sans" font-size="9.88" font-weight="normal" fill="#3c3c3c" text-anchor="start" textLength="47.3" lengthAdjust="spacingAndGlyphs" >999,75&#160;Hz</text><text x="1132.55" y="98.8" font-family="Liberation Sans" font-size="10" font-weight="normal" fill="#3c3c3c" text-anchor="start" textLength="122.52" lengthAdjust="spacingAndGlyphs" >-21,00&#160;dBV&#160;&#160;/&#160;89,12&#160;mVrms</text><path d="M1259.0 61.5h8.4M1259.0 65.1h8.4M1259.0 68.8h8.4" stroke="#5e5e5e" stroke-width="2.8"/><rect x="1269.3" y="58.6" width="11.6" height="12.8" fill="#cbcbcb"/><path d="M1271.5 60.2L1279.6 70M1279.6 60.2L1271.5 70" stroke="#333" stroke-width="2.1"/><text x="1290.75" y="68.6" font-family="Liberation Sans" font-size="15.12" font-weight="bold" fill="#101010" text-anchor="start" textLength="102.89" lengthAdjust="spacingAndGlyphs" >Sys:Averages</text><text x="1290.25" y="93.9" font-family="Liberation Sans" font-size="19.7" font-weight="normal" fill="#181818" text-anchor="start" textLength="26.14" lengthAdjust="spacingAndGlyphs" >5/5</text><path d="M1413.7 61.5h8.4M1413.7 65.1h8.4M1413.7 68.8h8.4" stroke="#5e5e5e" stroke-width="2.8"/><rect x="1424.0" y="58.6" width="11.6" height="12.8" fill="#cbcbcb"/><path d="M1426.1 60.2L1434.3 70M1434.3 60.2L1426.1 70" stroke="#333" stroke-width="2.1"/></svg>
<div style="position:absolute;left:0px;top:752px;width:1920px;height:18px;background:#ececec"></div>
<div style="position:absolute;left:334px;top:747px;width:1586px;height:5px;background:#8c8c8c"></div>
<div style="position:absolute;left:0px;top:752px;width:1920px;height:2px;background:#fbfbfb"></div>
<div style="position:absolute;left:1px;top:754px;width:56.5px;height:14px;background:#acacac;box-sizing:border-box;border-top:1px solid #909090;border-left:1px solid #909090;border-right:1px solid #f4f4f4"></div>
<div style="position:absolute;left:58.5px;top:754px;width:82.0px;height:14px;background:#acacac;box-sizing:border-box;border-top:1px solid #909090;border-left:1px solid #909090;border-right:1px solid #f4f4f4"></div>
<div style="position:absolute;left:142px;top:754px;width:45px;height:14px;background:#acacac;box-sizing:border-box;border-top:1px solid #909090;border-left:1px solid #909090;border-right:1px solid #f4f4f4"></div>
<div style="position:absolute;left:188.5px;top:754px;width:84.5px;height:14px;background:#acacac;box-sizing:border-box;border-top:1px solid #909090;border-left:1px solid #909090;border-right:1px solid #f4f4f4"></div>
<div style="position:absolute;left:277px;top:754px;width:64.5px;height:14px;background:#acacac;box-sizing:border-box;border-top:1px solid #909090;border-left:1px solid #909090;border-right:1px solid #f4f4f4"></div>
<div style="position:absolute;left:349px;top:754px;width:94.5px;height:14px;background:#acacac;box-sizing:border-box;border-top:1px solid #909090;border-left:1px solid #909090;border-right:1px solid #f4f4f4"></div>
<div style="position:absolute;left:445.5px;top:754px;width:95.0px;height:14px;background:#acacac;box-sizing:border-box;border-top:1px solid #909090;border-left:1px solid #909090;border-right:1px solid #f4f4f4"></div>
<div style="position:absolute;left:542.5px;top:754px;width:75.5px;height:14px;background:#acacac;box-sizing:border-box;border-top:1px solid #909090;border-left:1px solid #909090;border-right:1px solid #f4f4f4"></div>
<div style="position:absolute;left:620px;top:754px;width:32.5px;height:14px;background:#acacac;box-sizing:border-box;border-top:1px solid #909090;border-left:1px solid #909090;border-right:1px solid #f4f4f4"></div>
<div style="position:absolute;left:654.5px;top:754px;width:94.3px;height:14px;background:#acacac;box-sizing:border-box;border-top:1px solid #909090;border-left:1px solid #909090;border-right:1px solid #f4f4f4"></div>
<div style="position:absolute;left:343px;top:754px;width:2px;height:14px;background:#9a9a9a"></div>
<div style="position:absolute;left:347px;top:754px;width:2px;height:14px;background:#9a9a9a"></div>
<svg width="1920" height="770" style="z-index:5"><text x="5.39" y="765.6" font-family="Liberation Sans" font-size="11.34" font-weight="normal" fill="#161616" text-anchor="start" textLength="48.66" lengthAdjust="spacingAndGlyphs" stroke="#161616" stroke-width="0.25">Connected</text><text x="86.25" y="765.6" font-family="Liberation Sans" font-size="11.34" font-weight="normal" fill="#161616" text-anchor="start" textLength="26.57" lengthAdjust="spacingAndGlyphs" stroke="#161616" stroke-width="0.25">Ready</text><text x="146.38" y="765.6" font-family="Liberation Sans" font-size="11.34" font-weight="normal" fill="#161616" text-anchor="start" textLength="38.02" lengthAdjust="spacingAndGlyphs" stroke="#161616" stroke-width="0.25">Acq:&#160;165</text><text x="192.25" y="765.6" font-family="Liberation Sans" font-size="11.34" font-weight="normal" fill="#161616" text-anchor="start" textLength="77.26" lengthAdjust="spacingAndGlyphs" stroke="#161616" stroke-width="0.25">REST&#160;server&#160;ready</text><text x="281.19" y="765.6" font-family="Liberation Sans" font-size="11.34" font-weight="normal" fill="#161616" text-anchor="start" textLength="57.6" lengthAdjust="spacingAndGlyphs" stroke="#161616" stroke-width="0.25">Firmware:&#160;60</text><text x="353.5" y="765.6" font-family="Liberation Sans" font-size="11.34" font-weight="normal" fill="#161616" text-anchor="start" textLength="86.24" lengthAdjust="spacingAndGlyphs" stroke="#161616" stroke-width="0.25">USB&#160;Voltage:&#160;4,854V</text><text x="449.08" y="765.6" font-family="Liberation Sans" font-size="11.34" font-weight="normal" fill="#161616" text-anchor="start" textLength="88.14" lengthAdjust="spacingAndGlyphs" stroke="#161616" stroke-width="0.25">USB&#160;Current:&#160;0,876A</text><text x="546.27" y="765.6" font-family="Liberation Sans" font-size="11.34" font-weight="normal" fill="#161616" text-anchor="start" textLength="69.07" lengthAdjust="spacingAndGlyphs" stroke="#161616" stroke-width="0.25">ISO&#160;Current:&#160;---</text><text x="623.33" y="765.6" font-family="Liberation Sans" font-size="11.34" font-weight="normal" fill="#161616" text-anchor="start" textLength="25.03" lengthAdjust="spacingAndGlyphs" stroke="#161616" stroke-width="0.25">25,0C</text><text x="657.59" y="765.6" font-family="Liberation Sans" font-size="11.34" font-weight="normal" fill="#161616" text-anchor="start" textLength="85.28" lengthAdjust="spacingAndGlyphs" stroke="#161616" stroke-width="0.25">Calibration:&#160;Default</text></svg>
</body></html>
